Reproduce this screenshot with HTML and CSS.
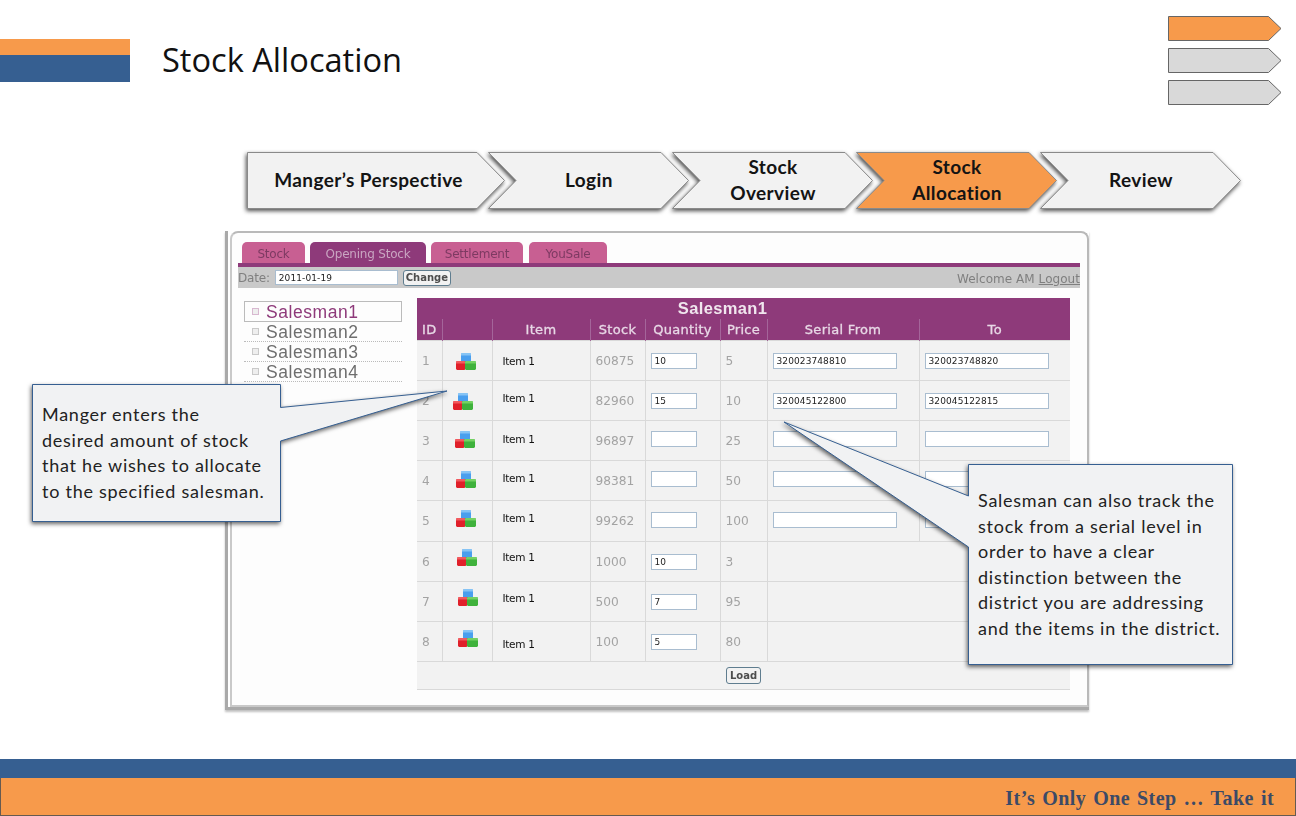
FILE: index.html
```html
<!DOCTYPE html>
<html lang="en">
<head>
<meta charset="utf-8">
<title>Stock Allocation</title>
<link rel="stylesheet" href="styles.css">
</head>
<body>
<svg class="defs" width="0" height="0" aria-hidden="true">
  <defs>
    <symbol id="cubes" viewBox="0 0 20 17">
      <path d="M5 1l1-1h8l1 1v8H5z" fill="#4a9fee"/>
      <path d="M5 1l1-1h8l1 1v1.500H5z" fill="#86c4f5"/>
      <path d="M0 9l1-1h7.500l1 1v7l-1 1H1l-1-1z" fill="#e0202a"/>
      <path d="M0 9l1-1h7.500l1 1v1.500H0z" fill="#f25a5f"/>
      <path d="M9 9l1-1h9l1 1v7l-1 1h-9l-1-1z" fill="#3fb23c"/>
      <path d="M9 9l1-1h9l1 1v1.500H9z" fill="#74d263"/>
    </symbol>
  </defs>
</svg>
<div class="slide">
  <header class="head">
    <div class="brand">
      <div class="bars"><div class="bar-orange"></div><div class="bar-blue"></div></div>
      <h1 class="title">Stock Allocation</h1>
    </div>
    <div class="mini-nav">
      <svg class="mini" viewBox="0 0 114 25"><path class="mini-on" d="M.5.5H100.500L113 12.500 100.500 24.500H.5Z"/></svg>
      <svg class="mini" viewBox="0 0 114 25"><path class="mini-off" d="M.5.5H100.500L113 12.500 100.500 24.500H.5Z"/></svg>
      <svg class="mini" viewBox="0 0 114 25"><path class="mini-off" d="M.5.5H100.500L113 12.500 100.500 24.500H.5Z"/></svg>
    </div>
  </header>

  <nav class="steps">
    <div class="step step-first">
      <svg class="step-shape" viewBox="0 0 258 57"><path d="M.5.500H230L257.500 28.500 230 56.500H.5Z"/></svg>
      <span class="step-label">Manger’s Perspective</span>
    </div>
    <div class="step">
      <svg class="step-shape" viewBox="0 0 202 57"><path d="M.5.500H173L200.500 28.500 173 56.500H.5L28 28.500Z"/></svg>
      <span class="step-label">Login</span>
    </div>
    <div class="step">
      <svg class="step-shape" viewBox="0 0 202 57"><path d="M.5.500H173L200.500 28.500 173 56.500H.5L28 28.500Z"/></svg>
      <span class="step-label">Stock<br>Overview</span>
    </div>
    <div class="step step-active">
      <svg class="step-shape" viewBox="0 0 202 57"><path d="M.5.500H173L200.500 28.500 173 56.500H.5L28 28.500Z"/></svg>
      <span class="step-label">Stock<br>Allocation</span>
    </div>
    <div class="step">
      <svg class="step-shape" viewBox="0 0 202 57"><path d="M.5.500H173L200.500 28.500 173 56.500H.5L28 28.500Z"/></svg>
      <span class="step-label">Review</span>
    </div>
  </nav>

  <section class="window">
    <div class="frame">
      <div class="tabs">
        <span class="tab tab-stock">Stock</span>
        <span class="tab tab-open">Opening Stock</span>
        <span class="tab tab-settle">Settlement</span>
        <span class="tab tab-yousale">YouSale</span>
      </div>
      <div class="toolbar">
        <div class="date-group">
          <span>Date:</span>
          <span class="field field-date">2011-01-19</span>
          <span class="btn">Change</span>
        </div>
        <div class="welcome">Welcome AM <a class="logout">Logout</a></div>
      </div>
      <div class="content">
        <ul class="people">
          <li class="person person-active">Salesman1</li>
          <li class="person">Salesman2</li>
          <li class="person">Salesman3</li>
          <li class="person">Salesman4</li>
        </ul>
        <table class="grid">
          <colgroup>
            <col class="c-id"><col class="c-ico"><col class="c-item"><col class="c-stock"><col class="c-qty"><col class="c-price"><col class="c-from"><col class="c-to">
          </colgroup>
          <thead>
            <tr class="title-row"><th colspan="8">Salesman1</th></tr>
            <tr class="head-row"><th class="th-id">ID</th><th></th><th>Item</th><th>Stock</th><th>Quantity</th><th>Price</th><th>Serial From</th><th>To</th></tr>
          </thead>
          <tbody>
            <tr>
              <td>1</td><td class="ico"><svg class="cube"><use href="#cubes"/></svg></td><td class="item"><span>Item 1</span></td><td>60875</td>
              <td><span class="field field-qty">10</span></td><td>5</td>
              <td><span class="field field-serial">320023748810</span></td><td><span class="field field-serial">320023748820</span></td>
            </tr>
            <tr>
              <td>2</td><td class="ico"><svg class="cube"><use href="#cubes"/></svg></td><td class="item"><span>Item 1</span></td><td>82960</td>
              <td><span class="field field-qty">15</span></td><td>10</td>
              <td><span class="field field-serial">320045122800</span></td><td><span class="field field-serial">320045122815</span></td>
            </tr>
            <tr>
              <td>3</td><td class="ico"><svg class="cube"><use href="#cubes"/></svg></td><td class="item"><span>Item 1</span></td><td>96897</td>
              <td><span class="field field-qty"></span></td><td>25</td>
              <td><span class="field field-serial"></span></td><td><span class="field field-serial"></span></td>
            </tr>
            <tr>
              <td>4</td><td class="ico"><svg class="cube"><use href="#cubes"/></svg></td><td class="item"><span>Item 1</span></td><td>98381</td>
              <td><span class="field field-qty"></span></td><td>50</td>
              <td><span class="field field-serial"></span></td><td><span class="field field-serial"></span></td>
            </tr>
            <tr>
              <td>5</td><td class="ico"><svg class="cube"><use href="#cubes"/></svg></td><td class="item"><span>Item 1</span></td><td>99262</td>
              <td><span class="field field-qty"></span></td><td>100</td>
              <td><span class="field field-serial"></span></td><td><span class="field field-serial"></span></td>
            </tr>
            <tr>
              <td>6</td><td class="ico"><svg class="cube"><use href="#cubes"/></svg></td><td class="item"><span>Item 1</span></td><td>1000</td>
              <td><span class="field field-qty">10</span></td><td>3</td><td colspan="2"></td>
            </tr>
            <tr>
              <td>7</td><td class="ico"><svg class="cube"><use href="#cubes"/></svg></td><td class="item"><span>Item 1</span></td><td>500</td>
              <td><span class="field field-qty">7</span></td><td>95</td><td colspan="2"></td>
            </tr>
            <tr>
              <td>8</td><td class="ico"><svg class="cube"><use href="#cubes"/></svg></td><td class="item"><span>Item 1</span></td><td>100</td>
              <td><span class="field field-qty">5</span></td><td>80</td><td colspan="2"></td>
            </tr>
            <tr class="load-row"><td colspan="8"><span class="btn">Load</span></td></tr>
          </tbody>
        </table>
      </div>
    </div>
  </section>

  <footer class="foot">
    <div class="foot-blue"></div>
    <div class="foot-orange">It’s Only One Step … Take it</div>
  </footer>

  <aside class="callout callout-left">
    <svg class="bubble" width="248" height="137"><path d="M.5.500H248.500V23.500L415 7 248.500 57V137.500H.5Z"/></svg>
    <p class="callout-text">Manger enters the<br>desired amount of stock<br>that he wishes to allocate<br>to the specified salesman.</p>
  </aside>
  <aside class="callout callout-right">
    <svg class="bubble" width="265" height="201"><path d="M.5.500H264.500V200.500H.5V83L-184 -42 .5 32Z"/></svg>
    <p class="callout-text">Salesman can also track the<br>stock from a serial level in<br>order to have a clear<br>distinction between the<br>district you are addressing<br>and the items in the district.</p>
  </aside>
</div>
</body>
</html>
```

FILE: styles.css
```css
* { box-sizing: border-box; }
html, body { margin: 0; padding: 0; background: #fff; }
body { width: 1296px; height: 816px; overflow: hidden; font-family: "Open Sans", sans-serif; }
.defs { position: absolute; }

.slide { position: relative; width: 1296px; height: 816px; display: flex; flex-direction: column; }

/* header */
.head { height: 152px; display: flex; justify-content: space-between; align-items: flex-start; padding: 16px 14px 0 0; }
.brand { display: flex; align-items: center; margin-top: 23px; }
.bars { width: 130px; }
.bar-orange { height: 16px; background: #f79a4b; }
.bar-blue { height: 27px; background: #365f91; }
.title { margin: 0 0 0 32px; padding-bottom: 1px; font-size: 32.600px; font-weight: 400; color: #111; line-height: 40px; }
.mini-nav { display: flex; flex-direction: column; gap: 7px; }
.mini { display: block; width: 114px; height: 25px; }
.mini path { stroke: #666; stroke-width: 1px; }
.mini-on { fill: #f79a4b; }
.mini-off { fill: #d9d9d9; }

/* process steps */
.steps { display: flex; margin-left: 247px; height: 58px; }
.step { position: relative; width: 202px; height: 57px; margin-left: -18px; padding-bottom: 2px; display: flex; align-items: center; justify-content: center; text-align: center; }
.step-first { width: 258px; margin: 0 1px 0 0; padding-right: 15px; }
.step-shape { position: absolute; left: 0; top: 0; width: 100%; height: 100%; overflow: visible; filter: drop-shadow(-1px 2px 2px rgba(0,0,0,.7)); }
.step-shape path { fill: #f2f2f2; stroke: #8a8a8a; stroke-width: 1px; }
.step-active .step-shape path { fill: #f79a4b; }
.step-label { position: relative; font-family: Lato, "Open Sans", sans-serif; font-size: 19px; font-weight: 700; letter-spacing: .4px; line-height: 26px; color: #141414; }

/* application window */
.window { width: 864px; height: 479px; margin: 21px 0 0 225px; border-left: 3px solid #a9a9a9; border-bottom: 3px solid #a9a9a9; box-shadow: 0 2px 2px rgba(0,0,0,.25); filter: blur(.35px); }
.frame { height: 100%; margin-left: 2px; padding: 9px 0 0 6px; background: #fdfdfd; border: 2px solid #b9b9b9; border-left-color: #c9c9c9; border-bottom-color: #c9c9c9; border-radius: 8px 8px 0 0; font-family: "DejaVu Sans", sans-serif; color: #8c8c8c; }
.tabs { display: flex; height: 21px; padding-left: 4px; }
.tab { display: flex; align-items: center; justify-content: center; height: 21px; padding-top: 2px; border-radius: 5px 5px 0 0; background: #c85f92; color: #7d3a62; font-size: 12px; letter-spacing: -.2px; }
.tab-stock { width: 63px; }
.tab-open { width: 116px; margin-left: 5px; background: #8e3a7a; color: #c9a5c1; }
.tab-settle { width: 92px; margin-left: 5px; }
.tab-yousale { width: 78px; margin-left: 6px; }
.toolbar { width: 842px; height: 25px; border-top: 4px solid #8e3a7a; background: #c9c9c9; display: flex; align-items: center; justify-content: space-between; font-size: 12px; color: #7f7f7f; letter-spacing: -.2px; }
.date-group { display: flex; align-items: center; }
.field { display: inline-flex; align-items: center; background: #fff; border: 1px solid #a9bdd0; font-size: 9px; color: #222; padding-left: 3px; letter-spacing: .1px; }
.field-date { width: 123px; height: 15px; margin: 0 5px 0 5px; }
.btn { display: inline-flex; align-items: center; justify-content: center; height: 16px; border: 1px solid #5f7d8f; border-radius: 3px; background: #f2f2f2; color: #4d4d4d; font-size: 10px; font-weight: 700; padding: 0 2px; letter-spacing: 0; }
.welcome { white-space: nowrap; padding-top: 2px; letter-spacing: .05px; }
.logout { text-decoration: underline; }

.content { display: flex; align-items: flex-start; padding-top: 10px; }
.people { list-style: none; width: 158px; margin: 3px 15px 0 6px; padding: 0; font-family: "Liberation Sans", sans-serif; font-size: 17.500px; letter-spacing: .55px; color: #6e6e6e; }
.person { height: 20px; padding-left: 22px; line-height: 20px; border-bottom: 1px dotted #bbb; position: relative; }
.person::before { content: ""; position: absolute; left: 8px; top: 6px; width: 5px; height: 5px; border: 1px solid #c9c9c9; background: #eee; }
.person-active { height: 21px; border: 1px solid #bbb; color: #8e3a7a; padding-left: 21px; }
.person-active::before { left: 7px; top: 6px; border-color: #d8b8d0; }

.grid { width: 653px; table-layout: fixed; border-collapse: collapse; background: #f2f2f2; font-size: 12px; color: #a3a3a3; }
.c-id { width: 25px; } .c-ico { width: 50px; } .c-item { width: 98px; } .c-stock { width: 55px; }
.c-qty { width: 75px; } .c-price { width: 47px; } .c-from { width: 152px; } .c-to { width: 151px; }
.grid th, .grid td { padding: 0; border: 1px solid #d9d9d9; }
.grid td:first-child { border-left: 0; }
.grid td:last-child { border-right: 0; }
.title-row th { height: 21px; border: 0; background: #8e3a7a; color: #f0e6ee; font-family: "Liberation Sans", sans-serif; font-size: 16.500px; font-weight: 700; letter-spacing: .35px; padding-right: 42px; }
.head-row th { height: 21px; border-color: #a4659a; border-top: 0; border-bottom: 0; background: #8e3a7a; color: #e8d8e6; font-size: 13px; font-weight: 400; letter-spacing: .3px; -webkit-text-stroke: .3px #e8d8e6; }
.head-row th:first-child { border-left: 0; }
.head-row th:last-child { border-right: 0; }
.grid tbody tr { height: 40px; }
.grid tbody tr:nth-child(5) { height: 41px; }
.grid tbody td { padding-left: 5px; font-size: 12.200px; }
.grid tbody td:nth-child(1), .grid tbody td:nth-child(4), .grid tbody td:nth-child(6) { padding-top: 1px; }
.grid tbody td.ico { padding-left: 12px; }
.grid tbody td.item { padding-left: 10px; color: #111; font-size: 10.500px; letter-spacing: -.3px; }
.grid tbody .field { margin-top: 1px; }
.cube { display: block; width: 20px; height: 17px; }
.field-qty { width: 46px; height: 16px; }
.field-serial { width: 124px; height: 16px; }
.grid tbody tr:nth-child(1) .cube { margin: 2px 0 0 1px; }
.grid tbody tr:nth-child(2) .cube { margin: 2px 0 0 -2px; }
.grid tbody tr:nth-child(3) .cube { margin: 0 0 2px 0; }
.grid tbody tr:nth-child(4) .cube { margin: 0 0 2px 1px; }
.grid tbody tr:nth-child(5) .cube { margin: 0 0 5px 1px; }
.grid tbody tr:nth-child(6) .cube { margin: 0 0 7px 2px; }
.grid tbody tr:nth-child(7) .cube { margin: 0 0 8px 3px; }
.grid tbody tr:nth-child(8) .cube { margin: 0 0 6px 3px; }
.grid tbody tr:nth-child(1) .item span { display: block; padding-top: 2px; }
.grid tbody tr:nth-child(2) .item span { display: block; padding-bottom: 4px; }
.grid tbody tr:nth-child(3) .item span { display: block; padding-bottom: 2px; }
.grid tbody tr:nth-child(4) .item span { display: block; padding-bottom: 4px; }
.grid tbody tr:nth-child(5) .item span { display: block; padding-bottom: 5px; }
.grid tbody tr:nth-child(6) .item span { display: block; padding-bottom: 8px; }
.grid tbody tr:nth-child(7) .item span { display: block; padding-bottom: 6px; }
.grid tbody tr:nth-child(8) .item span { display: block; padding-top: 6px; }
.grid tbody tr.load-row { height: 28px; }
.load-row td { text-align: center; padding: 0 !important; }
.load-row .btn { width: 35px; height: 17px; padding: 0; }

/* footer */
.foot { margin-top: auto; margin-bottom: 0; }
.foot-blue { height: 19px; background: #365f91; }
.foot-orange { height: 38px; background: #f79a4b; border: 1px solid #665a50; border-top: 0; padding-right: 21px; text-align: right; font-family: "Liberation Serif", serif; font-weight: 700; font-size: 20px; line-height: 40px; letter-spacing: .45px; word-spacing: 1.500px; color: #3c4a66; }

/* callouts */
.callout { position: absolute; }
.callout-left { left: 32px; top: 384px; width: 248px; height: 137px; padding: 18px 0 0 10px; }
.callout-right { left: 968px; top: 464px; width: 264px; height: 201px; padding: 24px 0 0 10px; }
.bubble { position: absolute; left: 0; top: 0; overflow: visible; filter: drop-shadow(-1px 2px 2px rgba(0,0,0,.6)); }
.bubble path { fill: #f1f2f3; stroke: #365f91; stroke-width: 1px; }
.callout-text { position: relative; margin: 0; font-family: Lato, "Open Sans", sans-serif; font-size: 18px; letter-spacing: .74px; line-height: 25.500px; color: #222; white-space: nowrap; }
```
